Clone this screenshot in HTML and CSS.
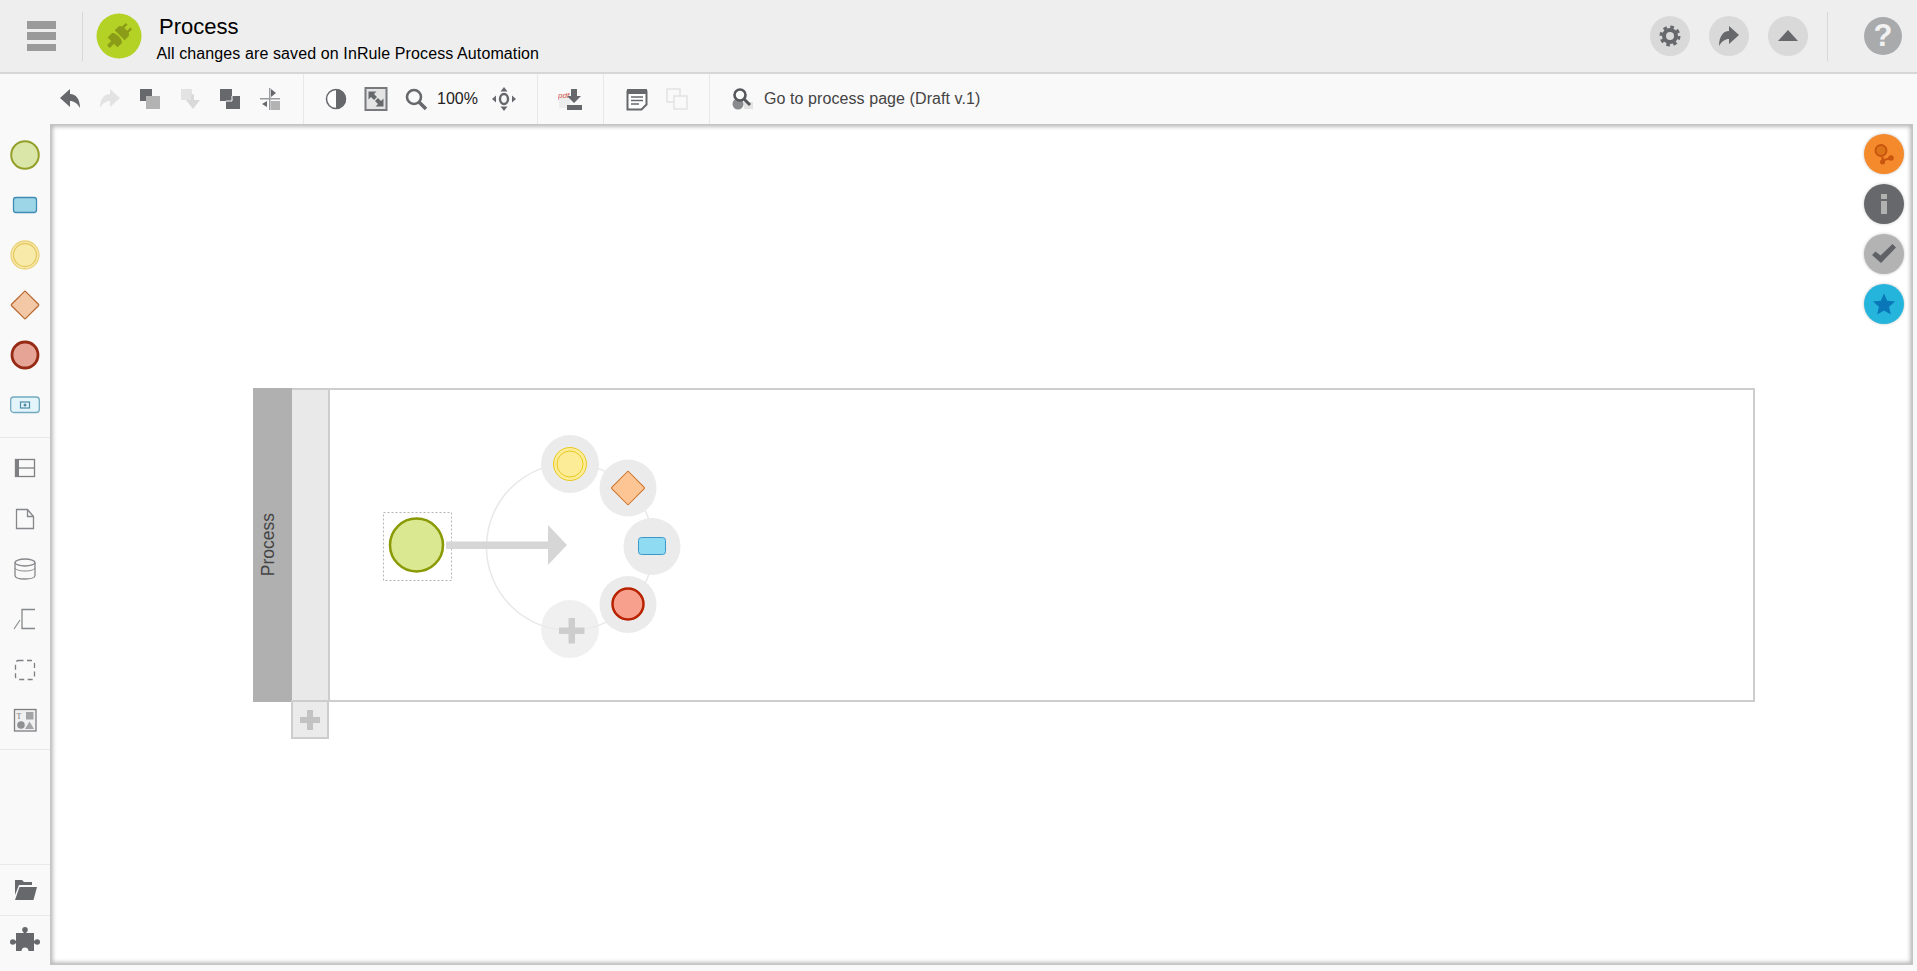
FILE: index.html
```html
<!DOCTYPE html>
<html lang="en">
<head>
<meta charset="utf-8">
<title>Process</title>
<link rel="stylesheet" href="styles.css">
</head>
<body>
<header class="top">
  <button class="burger" aria-label="Menu"><span></span><span></span><span></span></button>
  <div class="logo">
    <svg viewBox="0 0 46 46" width="46" height="46"><circle cx="23" cy="23" r="22.5" fill="#b4d125"/><g transform="rotate(-45 23 23)" fill="#8b9c18"><rect x="8" y="21" width="7" height="4"/><path d="M14 16h5.500c2 0 3 3.500 3 7s-1 7-3 7H14z"/><path d="M24 16h5c1.500 0 2.500 1 3 2.500h5v2.500h-4.500v4H37v2.500h-5c-.5 1.500-1.500 2.500-3 2.500h-5z"/></g></svg>
  </div>
  <div class="titles">
    <div class="title">Process</div>
    <div class="sub">All changes are saved on InRule Process Automation</div>
  </div>
  <div class="top-actions">
    <span class="round"><svg viewBox="0 0 24 24" width="24" height="24"><circle cx="12" cy="12" r="6" fill="none" stroke="#66686c" stroke-width="4"/><circle cx="12" cy="12" r="9" fill="none" stroke="#66686c" stroke-width="3" stroke-dasharray="3.6 3.47"/></svg></span>
    <span class="round"><svg viewBox="0 0 24 24" width="24" height="24"><path class="dk" d="M22 11 L12 2 V7 C6 7 2 13 2 22 C5 17 8 15 12 15 V20 Z"/></svg></span>
    <span class="round"><svg viewBox="0 0 24 24" width="24" height="24"><path class="dk" d="M12 6 L22 17 H2 Z"/></svg></span>
    <span class="top-div"></span>
    <span class="help">?</span>
  </div>
</header>

<nav class="toolbar">
  <div class="tgroup g1">
    <span class="tb"><svg viewBox="0 0 24 24" width="24" height="24"><path class="dk" d="M2 11 L12 2 V7 C18 7 22 12 22 21 C19 16 16 14 12 14 V20 Z"/></svg></span>
    <span class="tb"><svg viewBox="0 0 24 24" width="24" height="24"><path class="off" d="M22 11 L12 2 V7 C6 7 2 12 2 21 C5 16 8 14 12 14 V20 Z"/></svg></span>
    <span class="tb"><svg viewBox="0 0 24 24" width="24" height="24"><rect class="lt" x="8" y="9" width="14" height="13"/><rect class="dk" x="2" y="2" width="12" height="12"/><rect class="lt" x="8" y="9" width="6" height="5"/></svg></span>
    <span class="tb"><svg viewBox="0 0 24 24" width="24" height="24"><rect class="off" x="3" y="2" width="11" height="11"/><path class="offd" d="M13 8 l3 -1 v6 h6 l-7 9 l-7 -9 h5z"/></svg></span>
    <span class="tb"><svg viewBox="0 0 24 24" width="24" height="24"><rect class="dk" x="8" y="9" width="14" height="13"/><rect class="dk" x="2" y="2" width="12" height="12"/><path d="M8 14h6V9" stroke="#f9f9f9" stroke-width="1" fill="none"/></svg></span>
    <span class="tb"><svg viewBox="0 0 24 24" width="24" height="24"><rect class="lt" x="13" y="14" width="9" height="9"/><rect x="2" y="11" width="20" height="1.5" class="mid"/><rect x="11" y="1" width="1.5" height="22" class="mid"/><path class="dk" d="M13 2l5 4-5 4z M9 14v6l-5-3z"/></svg></span>
  </div>
  <div class="tgroup g2">
    <span class="tb"><svg viewBox="0 0 24 24" width="24" height="24"><circle cx="12" cy="12" r="9.5" fill="#fff" stroke="#66686c" stroke-width="1.5"/><path class="dk" d="M12 2a10 10 0 0 1 0 20z"/></svg></span>
    <span class="tb"><svg viewBox="0 0 24 24" width="24" height="24"><rect x="1.500" y="1" width="21" height="22" fill="#e4e4e4" stroke="#77797c" stroke-width="2"/><path class="dk" d="M4.500 4.500h8l-2.500 2.500 3 3-3 3-3-3-2.500 2.500z M19.500 19.500h-8l2.500-2.500-3-3 3-3 3 3 2.500-2.500z"/></svg></span>
    <span class="tb"><svg viewBox="0 0 24 24" width="24" height="24"><circle cx="10" cy="10" r="7" fill="none" stroke="#66686c" stroke-width="2.6"/><path d="M15 15l7 7" stroke="#66686c" stroke-width="3.6"/></svg></span>
    <span class="zoomval">100%</span>
    <span class="tb"><svg viewBox="0 0 24 24" width="24" height="24"><ellipse cx="12" cy="12" rx="4" ry="5" fill="none" stroke="#66686c" stroke-width="2.4"/><path class="dk" d="M12 0l3.500 4.500h-7z M12 24l3.500-4.500h-7z M0 12l4-3.500v7z M24 12l-4-3.500v7z"/></svg></span>
  </div>
  <div class="tgroup g3">
    <span class="tb"><svg viewBox="0 0 24 24" width="24" height="24"><rect x="1" y="7" width="11" height="14" fill="#ededed"/><text x="0" y="11" class="pdf">pdf</text><path class="dk" d="M13 2h6v7h4l-7 7-7-7h4z M9 18h15v5H9z"/></svg></span>
  </div>
  <div class="tgroup g4">
    <span class="tb"><svg viewBox="0 0 24 24" width="24" height="24"><path d="M2.500 4.500h19v13l-5 5h-14z" fill="#fff" stroke="#66686c" stroke-width="2"/><rect class="dk" x="2" y="2" width="20" height="5"/><path d="M6 10h12M6 13.500h12M6 17h8" stroke="#66686c" stroke-width="1.500"/></svg></span>
    <span class="tb"><svg viewBox="0 0 24 24" width="24" height="24"><rect x="2" y="2" width="13" height="13" fill="none" stroke="#e2e2e2" stroke-width="1.500"/><rect x="9" y="9" width="13" height="13" fill="#f9f9f9" stroke="#e2e2e2" stroke-width="1.500"/></svg></span>
  </div>
  <div class="tgroup g5">
    <span class="tb"><svg viewBox="0 0 24 24" width="24" height="24"><circle cx="7" cy="17" r="5.500" fill="#888a8d"/><rect class="off" x="13" y="15" width="9" height="7"/><circle cx="9" cy="8" r="5.500" fill="#f9f9f9" stroke="#55575b" stroke-width="2.600"/><path d="M13 12l6 6" stroke="#55575b" stroke-width="3"/></svg></span>
    <span class="goto">Go to process page (Draft v.1)</span>
  </div>
</nav>

<main class="work">
  <aside class="side">
    <div class="sgroup s1">
      <span class="si"><svg viewBox="0 0 30 30" width="30" height="30"><circle cx="15" cy="15" r="13.800" fill="#dae6a7" stroke="#949f2a" stroke-width="2"/></svg></span>
      <span class="si"><svg viewBox="0 0 30 30" width="30" height="30"><rect x="3.500" y="7.500" width="23" height="15" rx="2.500" fill="#9dd6e6" stroke="#3f8db5" stroke-width="1.300"/></svg></span>
      <span class="si"><svg viewBox="0 0 30 30" width="30" height="30"><circle cx="15" cy="15" r="14" fill="#f8eba9" stroke="#ead27c" stroke-width="1.300"/><circle cx="15" cy="15" r="11.500" fill="none" stroke="#e3c864" stroke-width="1.300"/></svg></span>
      <span class="si"><svg viewBox="0 0 30 30" width="30" height="30"><rect x="5" y="5" width="20" height="20" rx="1" transform="rotate(45 15 15)" fill="#f2c8a6" stroke="#b7662e" stroke-width="1.200"/></svg></span>
      <span class="si"><svg viewBox="0 0 30 30" width="30" height="30"><circle cx="15" cy="15" r="13" fill="#e6a497" stroke="#962a14" stroke-width="2.800"/></svg></span>
      <span class="si"><svg viewBox="0 0 30 30" width="30" height="30"><rect x="0.700" y="7" width="28.600" height="15.500" rx="3" fill="#e3f4fb" stroke="#73aabf" stroke-width="1.300"/><rect x="10.500" y="12" width="9" height="6" fill="none" stroke="#4d8aa3" stroke-width="1.200"/><circle cx="15" cy="15" r="1.500" fill="#4d8aa3"/></svg></span>
    </div>
    <div class="sgroup s2">
      <span class="si"><svg viewBox="0 0 30 30" width="30" height="30"><rect x="5.500" y="6.500" width="19" height="17" fill="none" stroke="#7d7f83" stroke-width="1.300"/><rect x="5" y="6" width="4" height="18" fill="#7d7f83"/><path d="M9 15h15" stroke="#7d7f83" stroke-width="1.300"/></svg></span>
      <span class="si"><svg viewBox="0 0 30 30" width="30" height="30"><path d="M6.500 5.500h11l6 7v12h-17z M17.500 5.500v7h6" fill="none" stroke="#85878a" stroke-width="1.300"/></svg></span>
      <span class="si"><svg viewBox="0 0 30 30" width="30" height="30"><ellipse cx="15" cy="8.500" rx="10" ry="3.500" fill="none" stroke="#85878a" stroke-width="1.300"/><path d="M5 8.500v13c0 2 4 3.500 10 3.500s10-1.500 10-3.500v-13" fill="none" stroke="#85878a" stroke-width="1.300"/><path d="M5 14c1 2 5 3 10 3s9-1 10-3" fill="none" stroke="#85878a" stroke-width="1"/></svg></span>
      <span class="si"><svg viewBox="0 0 30 30" width="30" height="30"><path d="M25 5.500h-13v19h13" fill="none" stroke="#85878a" stroke-width="1.300"/><path d="M10 16l-6 9" stroke="#85878a" stroke-width="1.100"/></svg></span>
      <span class="si"><svg viewBox="0 0 30 30" width="30" height="30"><rect x="5.500" y="5.500" width="19" height="19" rx="3" fill="none" stroke="#7d7f83" stroke-width="1.300" stroke-dasharray="5 3.500"/></svg></span>
      <span class="si"><svg viewBox="0 0 30 30" width="30" height="30"><rect x="4.500" y="4.500" width="21.500" height="21.500" fill="#f0f0f0" stroke="#7d7f83" stroke-width="1.300"/><text x="6.500" y="13.500" class="tt">T</text><rect x="16" y="7" width="7.500" height="7.500" fill="#a3a4a6"/><circle cx="11" cy="20" r="3.800" fill="#8e9092"/><path d="M19.500 16.500l4.500 7.500h-9z" fill="#a3a4a6"/></svg></span>
    </div>
    <div class="sgroup s3">
      <span class="si"><svg viewBox="0 0 30 30" width="30" height="30"><path class="dk" d="M5 5h7l2 2h8v3H9l-4 10z M9.500 12H27l-3.500 13H5z"/></svg></span>
    </div>
    <div class="sgroup s4">
      <span class="si"><svg viewBox="0 0 30 30" width="30" height="30"><path class="dk" d="M6 6h7.800v-2h2.400v2H24v7.800h2v2.400h-2V24h-5.500a3.500 3.500 0 0 0-7 0H6v-7.800H4v-2.400h2z"/><circle class="dk" cx="15" cy="2.800" r="2.800"/><circle class="dk" cx="2.800" cy="15" r="2.800"/><circle class="dk" cx="27.200" cy="15" r="2.800"/></svg></span>
    </div>
  </aside>

  <section class="canvas">
    <div class="pool">
      <div class="band"><span class="band-label">Process</span></div>
      <div class="lane"></div>
      <div class="lane-body"></div>
      <div class="add-lane"><span class="plus"></span></div>
    </div>
    <svg class="nodes" viewBox="51 125 700 600" width="700" height="600">
      <circle cx="570" cy="547" r="83.500" fill="none" stroke="#e8e8e8" stroke-width="1.500"/>
      <rect x="383.500" y="512.500" width="68" height="68" fill="none" stroke="#b5b5b5" stroke-width="1" stroke-dasharray="2 2"/>
      <circle cx="416.500" cy="545" r="26.500" fill="#dae891" stroke="#8a9a05" stroke-width="2.500"/>
      <path d="M446 541.500H548V525L567 545 548 565V549H446z" fill="#d6d6d6"/>
      <circle cx="570" cy="464" r="29" fill="#ebebeb"/>
      <circle cx="628" cy="488" r="28.500" fill="#ebebeb"/>
      <circle cx="652" cy="546.500" r="28.500" fill="#ebebeb"/>
      <circle cx="628" cy="604.500" r="28.500" fill="#ebebeb"/>
      <circle cx="570" cy="629" r="29" fill="#ebebeb" fill-opacity=".75"/>
      <circle cx="570" cy="464" r="16.500" fill="#fcec98" stroke="#e9c91e" stroke-width="1"/>
      <circle cx="570" cy="464" r="13" fill="none" stroke="#e9c91e" stroke-width="1"/>
      <rect x="616" y="476" width="24" height="24" rx="1" transform="rotate(45 628 488)" fill="#fec594" stroke="#c9702a" stroke-width="1"/>
      <rect x="638.500" y="537.500" width="27" height="17" rx="3" fill="#8fdbf2" stroke="#3c97c9" stroke-width="1"/>
      <circle cx="628" cy="604" r="15.500" fill="#f7a08d" stroke="#b92200" stroke-width="2.500"/>
      <path d="M568.500 618h6.500v9.500h9.500v6.500H575v9.500h-6.500V634H559v-6.500h9.500z" fill="#cdcdcd"/>
    </svg>
    <div class="fabs">
      <span class="fab orange"><svg viewBox="0 0 24 24" width="24" height="24"><circle cx="9" cy="8.500" r="5.500" fill="#dd7418" stroke="#c9560f" stroke-width="2"/><path d="M10.500 15v5M10.500 18.500L19 16" stroke="#c9560f" stroke-width="2.200"/><circle cx="19" cy="16" r="2.800" fill="#c9560f"/><circle cx="10.500" cy="20" r="2.500" fill="#c9560f"/></svg></span>
      <span class="fab slate"><svg viewBox="0 0 24 24" width="24" height="24"><rect x="9" y="2" width="6" height="5" fill="#b1b1b1"/><rect x="9" y="9" width="6" height="13" fill="#b1b1b1"/></svg></span>
      <span class="fab grey"><svg viewBox="0 0 26 26" width="26" height="26"><path d="M1 14l3.500-3.500 5 4L21.500 3 25 6.500 10 22z" fill="#5f6166"/></svg></span>
      <span class="fab blue"><svg viewBox="0 0 24 24" width="24" height="24"><path d="M12 1.500l3.200 7.300 7.800.8-5.900 5.200 1.700 7.700-6.800-4-6.800 4 1.700-7.700L1 9.600l7.800-.8z" fill="#0a77b8"/></svg></span>
    </div>
  </section>
</main>
</body>
</html>
```

FILE: styles.css
```css
* { box-sizing: border-box; }
html, body { height: 100%; }
body {
  margin: 0;
  display: flex;
  flex-direction: column;
  overflow: hidden;
  background: #f9f9f9;
  font-family: "Liberation Sans", Arial, sans-serif;
  color: #000;
}
.dk { fill: #66686c; }
.lt { fill: #b3b3b3; }
.mid { fill: #9a9b9e; }
.off { fill: #e3e3e3; }
.offd { fill: #d9d9d9; }
.pdf { font: italic 8px "Liberation Sans", sans-serif; fill: #d8614f; }
.tt { font: 8px "Liberation Serif", serif; fill: #777; }

.top {
  height: 74px;
  flex: none;
  display: flex;
  align-items: center;
  background: #eeeeee;
  border-bottom: 2px solid #d6d6d6;
  padding-left: 27px;
}
.burger {
  width: 29px;
  height: 30px;
  padding: 0;
  border: 0;
  background: none;
  display: flex;
  flex-direction: column;
  justify-content: space-between;
  margin-right: 26px;
}
.burger span { display: block; height: 7.500px; background: #9a9a9a; }
.logo {
  width: 61px;
  height: 49px;
  border-left: 1px solid #d8d8d8;
  padding-left: 13px;
  display: flex;
  align-items: center;
  margin-right: 13px;
  flex: none;
}
.titles { display: flex; flex-direction: column; margin-left: 0.500px; padding-top: 7px; }
.title { font-size: 22px; line-height: 26px; margin-left: 2.500px; }
.sub { font-size: 16px; line-height: 22px; margin-top: 3px; letter-spacing: 0.110px; }
.top-actions {
  margin-left: auto;
  display: flex;
  align-items: center;
  gap: 19px;
  padding-right: 15px;
}
.round {
  width: 40px;
  height: 40px;
  border-radius: 50%;
  background: #d9d9d9;
  display: flex;
  align-items: center;
  justify-content: center;
}
.top-div { width: 1px; height: 49px; background: #d8d8d8; margin-right: 17px; }
.help {
  width: 38px;
  height: 38px;
  border-radius: 50%;
  background: #a9aaac;
  color: #f2f2f2;
  font-size: 31px;
  font-weight: bold;
  line-height: 38px;
  text-align: center;
}

.toolbar {
  height: 50px;
  flex: none;
  display: flex;
  background: #f9f9f9;
  padding-left: 50px;
}
.tgroup {
  display: flex;
  align-items: center;
  border-right: 1px solid #e8e8e8;
}
.g1 { padding-right: 13px; }
.g2 { padding-left: 12px; padding-right: 13px; }
.g3 { padding-left: 12px; padding-right: 13px; }
.g4 { padding-left: 13px; padding-right: 12px; }
.g5 { padding-left: 13px; border-right: 0; }
.tb { width: 40px; height: 50px; display: flex; align-items: center; justify-content: center; flex: none; }
.zoomval { width: 40px; margin-left: 1px; margin-right: 7px; font-size: 16px; color: #222; }
.goto { font-size: 16px; color: #444; margin-left: 1px; margin-bottom: 1px; letter-spacing: 0.080px; }

.work { flex: 1; min-height: 0; display: flex; }
.side {
  width: 50px;
  flex: none;
  display: flex;
  flex-direction: column;
}
.sgroup { display: flex; flex-direction: column; border-bottom: 1px solid #e8e8e8; }
.s1 { padding: 6px 0 7px; }
.s2 { padding: 5px 0 4px; }
.s3 { margin-top: auto; border-top: 1px solid #e8e8e8; height: 52px; justify-content: center; }
.s4 { border-bottom: 0; height: 55px; padding-bottom: 3px; justify-content: center; }
.si { height: 50px; display: flex; align-items: center; justify-content: center; }
.s2 .si { height: 50.400px; }

.canvas {
  flex: 1;
  position: relative;
  margin: 0 4px 6px 0;
  background: #fff;
  border: 1px solid #c4c4c4;
  box-shadow: inset 1px 1px 5px #b5b5b5, inset -1px -1px 5px #b5b5b5;
}
.pool {
  position: absolute;
  left: 202px;
  top: 263px;
  width: 1502px;
  height: 314px;
  display: flex;
  border: 2px solid #cdcdcd;
  border-left: 0;
}
.band {
  width: 39px;
  margin: -2px 0;
  background: #b0b0b0;
  display: flex;
  align-items: center;
  justify-content: center;
  padding-right: 8px;
}
.band-label {
  writing-mode: vertical-rl;
  transform: rotate(180deg);
  font-size: 17.500px;
  color: #444;
}
.lane { width: 38px; background: #e9e9e9; border-right: 2px solid #cdcdcd; }
.lane-body { flex: 1; }
.add-lane {
  position: absolute;
  left: 38px;
  top: 310px;
  width: 38px;
  height: 39px;
  background: #ebebeb;
  border: 2px solid #cdcdcd;
  display: flex;
  align-items: center;
  justify-content: center;
}
.plus {
  width: 20px;
  height: 20px;
  background:
    linear-gradient(#c2c2c2, #c2c2c2) center / 6px 20px no-repeat,
    linear-gradient(#c2c2c2, #c2c2c2) center / 20px 6px no-repeat;
}
.nodes { position: absolute; left: 0; top: 0; }
.fabs {
  position: absolute;
  right: 8px;
  top: 9px;
  display: flex;
  flex-direction: column;
  gap: 10px;
}
.fab {
  width: 40px;
  height: 40px;
  border-radius: 50%;
  display: flex;
  align-items: center;
  justify-content: center;
  box-shadow: 0 0 3px rgba(0,0,0,.25);
}
.orange { background: #f58a2c; }
.slate { background: #66686c; }
.grey { background: #b3b3b3; }
.blue { background: #25b4dc; }
```
